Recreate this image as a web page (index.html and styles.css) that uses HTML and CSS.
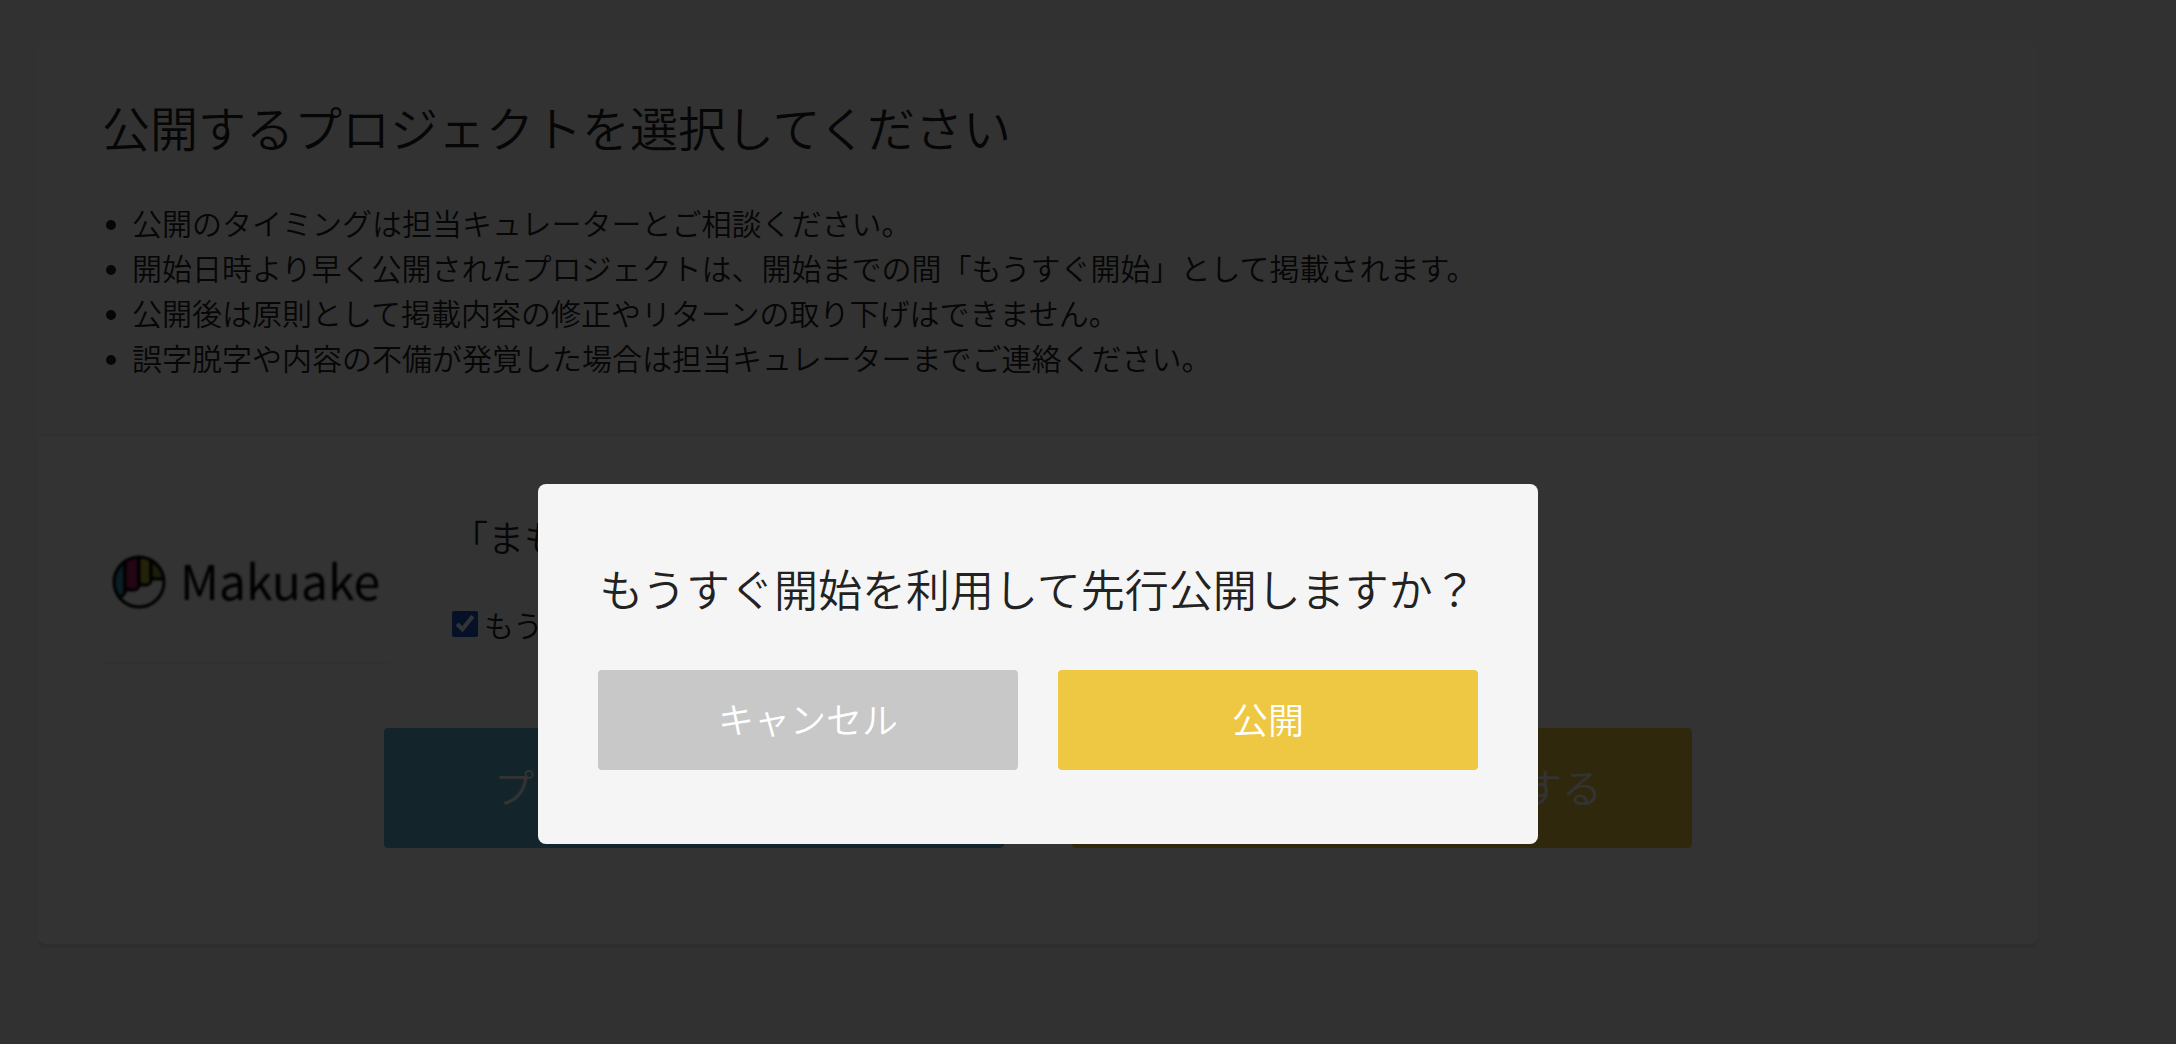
FILE: index.html
```html
<!DOCTYPE html>
<html lang="ja">
  <head>
    <meta charset="UTF-8" />
    <meta name="viewport" content="width=device-width, initial-scale=1.0" />
    <title>プロジェクトの公開</title>
    <link rel="stylesheet" href="styles.css">
  </head>
  <body>
    <main class="card">
      <section class="intro">
        <h1>公開するプロジェクトを選択してください</h1>
        <ul class="notes">
          <li>公開のタイミングは担当キュレーターとご相談ください。</li>
          <li>開始日時より早く公開されたプロジェクトは、開始までの間「もうすぐ開始」として掲載されます。</li>
          <li>公開後は原則として掲載内容の修正やリターンの取り下げはできません。</li>
          <li>誤字脱字や内容の不備が発覚した場合は担当キュレーターまでご連絡ください。</li>
        </ul>
      </section>

      <section class="select">
        <div class="project">
          <div class="thumb">
            <svg class="logo" viewBox="0 0 288 160" role="img" aria-label="Makuake">
              <clipPath id="ball"><circle cx="37" cy="80" r="25" /></clipPath>
              <g clip-path="url(#ball)" stroke="#000" stroke-width="3">
                <path d="M6 42h17v49l-4 4h-6l-7-5z" fill="#3494b0" />
                <path d="M23 42h14v42q-1 4-5 4h-5q-4 0-4-4z" fill="#a8225f" />
                <path d="M37 42h12v37q-1 4-5 4h-3q-4 0-4-4z" fill="#b4ac28" />
                <path d="M49 42h18v35h-14q-4 0-4-4z" fill="#809c30" />
              </g>
              <circle cx="37" cy="80" r="25" fill="none" stroke="#000" stroke-width="3" />
              <text class="logo-text" x="78" y="98">Makuake</text>
            </svg>
          </div>
          <div class="detail">
            <h2>「まもうすぐ」</h2>
            <label class="early">
              <input type="checkbox" checked />
              もうすぐ開始
            </label>
          </div>
        </div>
        <div class="actions">
          <button type="button" class="btn blue">プレビューを確認する</button>
          <button type="button" class="btn yellow">プロジェクトを公開する</button>
        </div>
      </section>
    </main>

    <div class="overlay">
      <div class="dialog" role="dialog" aria-modal="true" aria-labelledby="dialog-title">
        <p class="dialog-title" id="dialog-title">もうすぐ開始を利用して先行公開しますか？</p>
        <div class="dialog-buttons">
          <button type="button" class="btn gray">キャンセル</button>
          <button type="button" class="btn yellow">公開</button>
        </div>
      </div>
    </div>
  </body>
</html>
```
FILE: styles.css
```css
* {
  box-sizing: border-box;
}
body {
  margin: 0;
  padding: 42px 138px 96px 38px;
  background: #f5f5f5;
  color: #222;
  font-family: "Noto Sans CJK JP", sans-serif;
  font-weight: 350;
}
h1,
h2,
p,
ul {
  margin: 0;
  padding: 0;
  font-weight: 350;
}
.card {
  background: #fff;
  border-radius: 8px;
  box-shadow: 0 4px 0 #e6e6e6;
}
.intro {
  padding: 48px 64px 54px;
  background: #fafafa;
  border-bottom: 2px solid #f0f0f0;
  border-radius: 8px 8px 0 0;
}
h1 {
  font-size: 48px;
  line-height: 72px;
}
.notes {
  margin-top: 38px;
  list-style: none;
  font-size: 30px;
  line-height: 45px;
}
.notes li {
  display: flex;
  gap: 16px;
  padding-left: 4px;
}
.notes li::before {
  content: "";
  flex: none;
  width: 10px;
  height: 10px;
  margin-top: 20px;
  border-radius: 50%;
  background: #222;
}
.select {
  padding: 66px 64px 96px;
}
.project {
  display: flex;
  gap: 62px;
}
.thumb {
  width: 288px;
  border-bottom: 2px solid #f5f5f5;
}
.logo {
  display: block;
  width: 100%;
  filter: blur(1px);
}
.logo-text {
  font-size: 48px;
  font-weight: 400;
  fill: #000;
}
.detail {
  padding-top: 4px;
}
h2 {
  font-size: 36px;
  line-height: 60px;
}
.early {
  display: flex;
  align-items: center;
  gap: 6px;
  margin-top: 32px;
  font-size: 30px;
  line-height: 52px;
}
.early input {
  width: 26px;
  height: 26px;
  margin: 0;
  accent-color: #2058c8;
}
.actions {
  display: flex;
  justify-content: center;
  gap: 68px;
  margin-top: 64px;
}
.btn {
  flex: 1;
  height: 100px;
  padding: 0 0 4px;
  border: 0;
  border-radius: 4px;
  color: #fff;
  font: inherit;
  font-size: 36px;
}
.actions .btn {
  max-width: 620px;
  height: 120px;
  font-size: 40px;
}
.blue {
  background: #5fb9d7;
}
.yellow {
  background: #efc843;
}
.gray {
  background: #c8c8c8;
}
.overlay {
  position: fixed;
  inset: 0;
  display: flex;
  align-items: center;
  justify-content: center;
  padding: 284px 100px 0 0;
  background: rgba(0, 0, 0, 0.8);
}
.dialog {
  width: 1000px;
  padding: 72px 60px 74px;
  background: #f5f5f5;
  border-radius: 8px;
}
.dialog-title {
  font-size: 44px;
  line-height: 64px;
  text-align: center;
  white-space: nowrap;
}
.dialog-buttons {
  display: flex;
  gap: 40px;
  margin-top: 50px;
}
```
